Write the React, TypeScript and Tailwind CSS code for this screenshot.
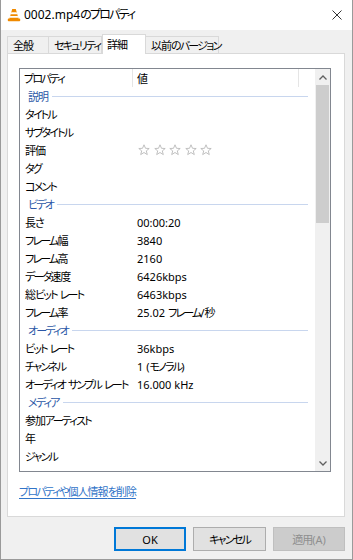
import React from "react";

type Row =
  | { kind: "group"; label: string }
  | { kind: "item"; name: string; value?: string; stars?: boolean };

const rows: Row[] = [
  { kind: "group", label: "説明" },
  { kind: "item", name: "タイトル" },
  { kind: "item", name: "サブタイトル" },
  { kind: "item", name: "評価", stars: true },
  { kind: "item", name: "タグ" },
  { kind: "item", name: "コメント" },
  { kind: "group", label: "ビデオ" },
  { kind: "item", name: "長さ", value: "00:00:20" },
  { kind: "item", name: "フレーム幅", value: "3840" },
  { kind: "item", name: "フレーム高", value: "2160" },
  { kind: "item", name: "データ速度", value: "6426kbps" },
  { kind: "item", name: "総ビット レート", value: "6463kbps" },
  { kind: "item", name: "フレーム率", value: "25.02 フレーム/秒" },
  { kind: "group", label: "オーディオ" },
  { kind: "item", name: "ビット レート", value: "36kbps" },
  { kind: "item", name: "チャンネル", value: "1 (モノラル)" },
  { kind: "item", name: "オーディオ サンプル レート", value: "16.000 kHz" },
  { kind: "group", label: "メディア" },
  { kind: "item", name: "参加アーティスト" },
  { kind: "item", name: "年" },
  { kind: "item", name: "ジャンル" },
];

const tabs = [
  { label: "全般", w: "w-[42px]" },
  { label: "セキュリティ", w: "w-[54px]" },
  { label: "詳細", w: "w-[44px]", active: true },
  { label: "以前のバージョン", w: "w-[74px]" },
];

// Kana and kanji runs are tightened so they come out as narrow as the Windows UI font
function T({ children }: { children: string }) {
  const parts = children.split(/([\u3040-\u30ff]+|[\u3000-\u303f\u3400-\u9fff\uff00-\uffef]+)/);
  return (
    <span>
      {parts.map((p, i) => {
        if (i % 2 === 0) return p;
        const kana = /^[\u3040-\u30ff]/.test(p);
        return (
          <span key={i} className={kana ? "tracking-[-1.8px]" : "tracking-[-1px]"}>
            {p}
          </span>
        );
      })}
    </span>
  );
}

function VlcIcon() {
  return (
    <svg width="14" height="14" viewBox="0 0 14 14">
      <path d="M5.2 1 H8.8 L11.6 11 H2.4 Z" fill="#f08a00" />
      <path d="M4.3 4.3 H9.7 L10.2 6.2 H3.8 Z" fill="#fff" />
      <path d="M3.2 8 H10.8 L11.3 9.8 H2.7 Z" fill="#fff" />
      <rect x="0.8" y="10.6" width="12.4" height="2.6" rx="0.8" fill="#f08a00" />
    </svg>
  );
}

function Star({ x }: { x: number }) {
  return (
    <svg width="12" height="12" viewBox="0 0 12 12" style={{ marginLeft: x }}>
      <path
        d="M6 0.8 L7.5 4.3 L11.2 4.5 L8.3 6.9 L9.3 10.6 L6 8.5 L2.7 10.6 L3.7 6.9 L0.8 4.5 L4.5 4.3 Z"
        fill="none"
        stroke="#b9b9b9"
        strokeWidth="0.9"
        strokeLinejoin="round"
      />
    </svg>
  );
}

export default function App() {
  return (
    <div className="w-[353px] h-[560px] flex flex-col border-l border-r border-b border-[#9a9a9a] overflow-hidden text-[11px] text-black font-['Noto_Sans','Noto_Sans_CJK_JP',sans-serif] [font-feature-settings:'palt'] leading-none">
      {/* Title bar */}
      <div className="h-[30px] bg-white flex items-center shrink-0">
        <div className="ml-[6px] w-[14px] h-[14px]">
          <VlcIcon />
        </div>
        <span className="ml-[3px] text-[12px] whitespace-nowrap">
          <T>0002.mp4のプロパティ</T>
        </span>
        <svg className="ml-auto mr-[10px]" width="10" height="10" viewBox="0 0 10 10">
          <path d="M0.5 0.5 L9.5 9.5 M9.5 0.5 L0.5 9.5" stroke="#333" strokeWidth="1" />
        </svg>
      </div>

      <div className="flex-1 bg-[#f0f0f0] pl-[6px] pr-[7px] flex flex-col">
        {/* Tabs */}
        <div className="flex items-end h-[23px] relative z-10">
          {tabs.map((t) =>
            t.active ? (
              <div
                key={t.label}
                className={`${t.w} h-[20px] bg-white border border-b-0 border-[#d9d9d9] -mb-px flex items-center pl-[4px] pb-[1px] whitespace-nowrap`}
              >
                <T>{t.label}</T>
              </div>
            ) : (
              <div
                key={t.label}
                className={`${t.w} h-[17px] bg-[#f0f0f0] border border-b-0 border-[#d9d9d9] -ml-px first:ml-0 flex items-center pl-[5px] pt-[1px] whitespace-nowrap`}
              >
                <T>{t.label}</T>
              </div>
            )
          )}
        </div>

        {/* Panel */}
        <div className="h-[464px] bg-white border border-[#d9d9d9] flex flex-col">
          {/* List box */}
          <div className="ml-[11px] mt-[14px] w-[312px] h-[404px] border border-[#828790] flex overflow-hidden">
            <div className="flex-1 flex flex-col overflow-hidden">
              <div className="h-[18px] shrink-0 flex">
                <div className="w-[113px] border-r border-[#e5e5e5] flex items-center pl-[4px]">
                  <T>プロパティ</T>
                </div>
                <div className="w-[166px] border-r border-[#e5e5e5] flex items-center pl-[4px]">
                  <T>値</T>
                </div>
              </div>
              {rows.map((r, i) =>
                r.kind === "group" ? (
                  <div key={i} className="h-[18px] shrink-0 flex items-center pl-[8px] pr-[7px]">
                    <span className="text-[#2b57a6]">
                      <T>{r.label}</T>
                    </span>
                    <div className="flex-1 ml-[4px] h-px bg-[#c8d6ee]" />
                  </div>
                ) : (
                  <div key={i} className="h-[18px] shrink-0 flex items-center">
                    <div className="w-[113px] pl-[5px] whitespace-nowrap">
                      <T>{r.name}</T>
                    </div>
                    <div className="pl-[4px] flex items-center whitespace-nowrap">
                      {r.stars ? (
                        <div className="flex items-center">
                          <Star x={1} />
                          <Star x={3.5} />
                          <Star x={3.5} />
                          <Star x={3.5} />
                          <Star x={3.5} />
                        </div>
                      ) : r.value ? (
                        <T>{r.value}</T>
                      ) : null}
                    </div>
                  </div>
                )
              )}
            </div>
            {/* Scrollbar */}
            <div className="w-[15px] bg-[#f0f0f0] flex flex-col shrink-0">
              <div className="h-[16px] flex items-center justify-center">
                <svg width="8" height="5" viewBox="0 0 8 5">
                  <path d="M0.5 4.5 L4 1 L7.5 4.5" fill="none" stroke="#606060" strokeWidth="1.3" />
                </svg>
              </div>
              <div className="h-[138px] bg-[#cdcdcd] mx-[1px]" />
              <div className="flex-1" />
              <div className="h-[16px] flex items-center justify-center">
                <svg width="8" height="5" viewBox="0 0 8 5">
                  <path d="M0.5 0.5 L4 4 L7.5 0.5" fill="none" stroke="#606060" strokeWidth="1.3" />
                </svg>
              </div>
            </div>
          </div>

          <div className="ml-[11px] mt-[14px]">
            <span className="text-[#3174c8] underline underline-offset-2">
              <T>プロパティや個人情報を削除</T>
            </span>
          </div>
        </div>

        {/* Buttons */}
        <div className="mt-[10px] flex justify-end gap-[7px]">
          <button className="w-[72px] h-[24px] bg-[#e1e1e1] border-2 border-[#0078d7] flex items-center justify-center">
            OK
          </button>
          <button className="w-[73px] h-[24px] bg-[#e1e1e1] border border-[#adadad] flex items-center justify-center">
            <T>キャンセル</T>
          </button>
          <button className="w-[72px] h-[24px] bg-[#cccccc] border border-[#bfbfbf] text-[#8f8f8f] flex items-center justify-center">
            <T>適用(A)</T>
          </button>
        </div>
      </div>
    </div>
  );
}
